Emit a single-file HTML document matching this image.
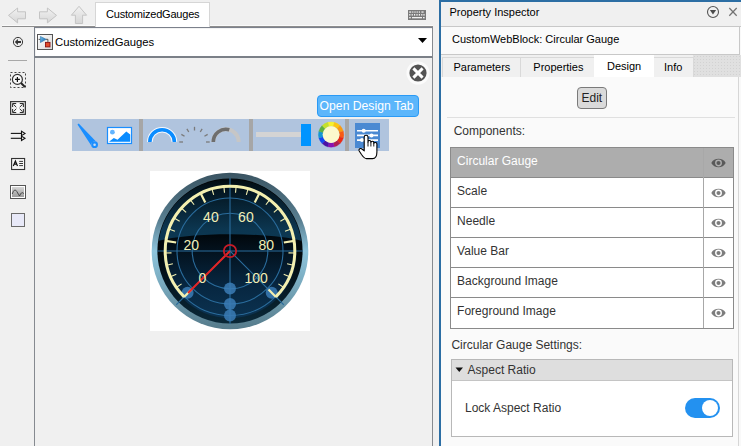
<!DOCTYPE html>
<html><head><meta charset="utf-8">
<style>
*{margin:0;padding:0;box-sizing:border-box}
html,body{width:741px;height:446px;overflow:hidden;background:#f0f0f0;font-family:"Liberation Sans",sans-serif;color:#000}
.a{position:absolute}
.t{position:absolute;white-space:nowrap;line-height:1}
</style></head><body>
<!-- LEFT EDITOR -->
<svg class="a" style="left:0;top:0" width="95" height="26" viewBox="0 0 95 26"><defs><linearGradient id="ga" x1="0" y1="0" x2="0" y2="1"><stop offset="0" stop-color="#f2f2f2"/><stop offset="1" stop-color="#d6d6d6"/></linearGradient></defs><path d="M8.5,15.4 L17.6,8 L17.6,11.8 L25.5,11.8 L25.5,18.8 L17.6,18.8 L17.6,22.9Z" fill="url(#ga)" stroke="#c4c4c4" stroke-width="1"/><path d="M56.5,15.4 L47.4,8 L47.4,11.8 L39.5,11.8 L39.5,18.8 L47.4,18.8 L47.4,22.9Z" fill="url(#ga)" stroke="#c4c4c4" stroke-width="1"/><path d="M79,6.3 L86.6,15.2 L82.6,15.2 L82.6,23.5 L75.4,23.5 L75.4,15.2 L71.4,15.2Z" fill="url(#ga)" stroke="#c4c4c4" stroke-width="1"/></svg>
<div class="a" style="left:2px;top:25px;width:431px;height:1px;background:#fafafa"></div>
<div class="a" style="left:2px;top:26px;width:431px;height:1px;background:#8e8e8e"></div>
<div class="a" style="left:95px;top:2px;width:115px;height:25px;background:#fff;border:1px solid #d6d6d6;border-bottom:none"></div>
<div class="t" style="left:106px;top:9.49px;font-size:11px;color:#000;letter-spacing:-0.2px">CustomizedGauges</div>
<svg class="a" style="left:407px;top:9px" width="20" height="12" viewBox="0 0 20 12"><rect x="1" y="1" width="18" height="10" fill="#7a7a7a"/><g fill="#f0f0f0"><rect x="2.2" y="2.4" width="2" height="1.3"/><rect x="5.2" y="2.4" width="1.2" height="1.3"/><rect x="7.4" y="2.4" width="1.2" height="1.3"/><rect x="9.6" y="2.4" width="1.2" height="1.3"/><rect x="11.8" y="2.4" width="1.2" height="1.3"/><rect x="14.4" y="2.4" width="2.2" height="1.3"/><rect x="2.2" y="5" width="1.2" height="1.6"/><rect x="4.6" y="5" width="1.2" height="1.6"/><rect x="7" y="5" width="1.2" height="1.6"/><rect x="9.4" y="5" width="1.2" height="1.6"/><rect x="11.8" y="5" width="1.2" height="1.6"/><rect x="14.2" y="5" width="1.2" height="1.6"/><rect x="16.4" y="5" width="1.2" height="1.6"/><rect x="2.2" y="8" width="1.6" height="1.3"/><rect x="5" y="8" width="10" height="1.3"/><rect x="16" y="8" width="1.6" height="1.3"/></g></svg>
<div class="a" style="left:34px;top:27px;width:399px;height:31px;background:#fff;border-left:1px solid #7a808a;border-top:1px solid #7c818c;border-right:1px solid #868a90;border-bottom:2px solid #7b8088;box-shadow:inset 1px 1px 0 #f2f2f2"></div>
<svg class="a" style="left:37px;top:34px" width="16" height="16" viewBox="0 0 16 16"><defs><linearGradient id="gb" x1="0" y1="0" x2="1" y2="1"><stop offset="0" stop-color="#fff"/><stop offset="1" stop-color="#d8d8d8"/></linearGradient></defs><rect x="0.5" y="0.5" width="15" height="15" fill="url(#gb)" stroke="#555"/><path d="M1.6,5.4 H3.4 M9,5.3 L10.9,5.3 L10.9,8.4" fill="none" stroke="#333" stroke-width="0.8"/><defs><linearGradient id="gt" x1="0" y1="0" x2="1" y2="1"><stop offset="0" stop-color="#6cc0f0"/><stop offset="1" stop-color="#1a64a8"/></linearGradient></defs><path d="M3.4,2.4 L9.2,5.3 L3.4,8.6Z" fill="url(#gt)" stroke="#1d5f94" stroke-width="0.5"/><rect x="8.5" y="8.4" width="4.5" height="4.5" fill="#e04a28" stroke="#8a1010" stroke-width="0.9"/></svg>
<div class="t" style="left:55px;top:37.03px;font-size:11.3px;color:#000;">CustomizedGauges</div>
<svg class="a" style="left:416px;top:37px" width="12" height="7" viewBox="0 0 12 7"><path d="M2,1 L11,1 L6.5,6Z" fill="#000"/></svg>
<div class="a" style="left:34px;top:58px;width:1px;height:388px;background:#868a90"></div>
<div class="a" style="left:432px;top:58px;width:1px;height:388px;background:#868a90"></div>
<svg class="a" style="left:0;top:27px" width="34" height="210" viewBox="0 27 34 210"><circle cx="18" cy="42" r="4.6" fill="#ececec" stroke="#3a3a3a" stroke-width="1"/><path d="M14.8,42 L17.9,39.1 L17.9,40.9 L21,40.9 L21,43.1 L17.9,43.1 L17.9,44.9Z" fill="#333"/><rect x="8" y="60" width="19" height="1" fill="#a8a8a8"/><rect x="10.5" y="72.5" width="15" height="15" fill="none" stroke="#444" stroke-width="1" stroke-dasharray="2,2"/><circle cx="17.4" cy="79.4" r="5" fill="#f8f8f8" stroke="#333" stroke-width="1.2"/><path d="M15,79.4 H19.9 M17.4,77 V81.9" stroke="#111" stroke-width="1.2"/><path d="M21,83 L25,87" stroke="#222" stroke-width="2"/><defs><linearGradient id="gf" x1="0" y1="0" x2="1" y2="0"><stop offset="0" stop-color="#e4e4e4"/><stop offset="0.5" stop-color="#fdfdfd"/><stop offset="1" stop-color="#e4e4e4"/></linearGradient></defs><rect x="10.6" y="101.6" width="14.8" height="12.8" fill="url(#gf)" stroke="#3a3a3a" stroke-width="1.2"/><g stroke="#222" stroke-width="0.95" fill="none"><path d="M12.6,107 V103.5 H16.2 M13.4,104.3 L16.3,107.2"/><path d="M23.4,107 V103.5 H19.8 M22.6,104.3 L19.7,107.2"/><path d="M12.6,109 V112.5 H16.2 M13.4,111.7 L16.3,108.8"/><path d="M23.4,109 V112.5 H19.8 M22.6,111.7 L19.7,108.8"/></g><g stroke="#111" stroke-width="1.1" fill="none"><path d="M10.8,133.4 H21.5"/><path d="M21.5,131.2 L25,133.4 L21.5,135.6Z" fill="#f4f4f4"/><path d="M10.8,138.3 H21.5"/><path d="M21.5,136.1 L25,138.3 L21.5,140.5Z" fill="#f4f4f4"/></g><rect x="11.6" y="158.5" width="13" height="11" fill="#f6f6f6" stroke="#333" stroke-width="1.1"/><path d="M13.3,166 L15.4,161 L17.5,166 M14.1,164.2 H16.7" stroke="#111" stroke-width="1.2" fill="none"/><path d="M19.2,161.4 H23 M19.2,163.5 H23 M19.2,165.6 H23" stroke="#222" stroke-width="0.9"/><defs><linearGradient id="gi" x1="0" y1="0" x2="0" y2="1"><stop offset="0" stop-color="#d6d6d6"/><stop offset="1" stop-color="#9c9c9c"/></linearGradient></defs><rect x="10.5" y="185.5" width="15" height="13" fill="#fff" stroke="#555" stroke-width="1"/><rect x="12" y="187" width="12" height="10" fill="url(#gi)"/><path d="M12.2,194 Q14.5,187.5 16.8,191.5 T19.5,196 Q21.5,191 23.8,193.5" fill="none" stroke="#3a3a3a" stroke-width="0.9"/><rect x="11.5" y="213.5" width="13" height="13" fill="#e8e9f8" stroke="#6a6a6a" stroke-width="1"/></svg>
<!-- CANVAS -->
<svg class="a" style="left:405px;top:60px" width="26" height="26" viewBox="0 0 26 26"><circle cx="13" cy="13" r="11.5" fill="#fbfbfb"/><circle cx="13" cy="13" r="8.6" fill="#545454"/><path d="M8.4,8.4 L17.6,17.6 M17.6,8.4 L8.4,17.6" stroke="#fff" stroke-width="2.9"/></svg>
<div class="a" style="left:317px;top:95px;width:102px;height:22px;background:#5cb6fb;border:1px solid #2a9af5;border-radius:4px"></div>
<div class="t" style="left:319.6px;top:100.17px;font-size:12.2px;color:#fff;">Open Design Tab</div>
<div class="a" style="left:72px;top:119px;width:317px;height:32px;background:#b0c4de"></div>
<div class="a" style="left:139px;top:119px;width:4px;height:32px;background:#a6a6a6"></div>
<div class="a" style="left:249px;top:119px;width:4px;height:32px;background:#a6a6a6"></div>
<div class="a" style="left:345px;top:119px;width:4px;height:32px;background:#a6a6a6"></div>
<svg class="a" style="left:72px;top:119px" width="317" height="32" viewBox="72 119 317 32"><path d="M77.47,124.50 L92.02,146.76 A3.3,3.3 0 1 1 97.18,142.64 L78.73,123.50 Z" fill="#1a8eff"/><circle cx="94.6" cy="144.7" r="3.4" fill="#1a8eff"/><circle cx="94.6" cy="144.7" r="1.3" fill="#c9dcf2"/><rect x="107.5" y="127.5" width="24" height="16" fill="#fff" stroke="#1a8eff" stroke-width="1.2"/><circle cx="112.4" cy="132.2" r="2.4" fill="#62b4ff"/><path d="M109,141.8 L113.8,138 L117.5,139.8 L126.3,131.5 L130.2,134.5 L130.2,141.8Z" fill="#0a8cff"/><path d="M149.8,142 A12.3,12.3 0 0 1 174.4,142" fill="none" stroke="#f4f8ff" stroke-width="5.6"/><path d="M149.8,142 A12.3,12.3 0 0 1 174.4,142" fill="none" stroke="#0a8cff" stroke-width="3.6"/><path d="M206.00,142.00 L209.70,142.00" stroke="#7a7a7a" stroke-width="1.3"/><path d="M204.46,136.25 L207.66,134.40" stroke="#7a7a7a" stroke-width="1.3"/><path d="M200.25,132.04 L202.10,128.84" stroke="#7a7a7a" stroke-width="1.3"/><path d="M194.50,130.50 L194.50,126.80" stroke="#7a7a7a" stroke-width="1.3"/><path d="M188.75,132.04 L186.90,128.84" stroke="#7a7a7a" stroke-width="1.3"/><path d="M184.54,136.25 L181.34,134.40" stroke="#7a7a7a" stroke-width="1.3"/><path d="M183.00,142.00 L179.30,142.00" stroke="#7a7a7a" stroke-width="1.3"/><path d="M213.3,142 A12.7,12.7 0 0 1 238.7,142" fill="none" stroke="#c6c6c6" stroke-width="4"/><path d="M213.3,142 A12.7,12.7 0 0 1 229.29,129.73" fill="none" stroke="#6e6e6e" stroke-width="3.6"/><rect x="256" y="132" width="45" height="5" fill="#d4d4d4"/><rect x="301" y="124" width="10" height="22" fill="#0094ff"/><path d="M327.81,122.33 A12.7,12.7 0 0 1 334.39,122.33 L333.27,126.49 A8.4,8.4 0 0 0 328.93,126.49 Z" fill="#f6f02e" stroke="#f6f02e" stroke-width="0.3"/><path d="M334.39,122.33 A12.7,12.7 0 0 1 340.08,125.62 L337.04,128.66 A8.4,8.4 0 0 0 333.27,126.49 Z" fill="#fbc512" stroke="#fbc512" stroke-width="0.3"/><path d="M340.08,125.62 A12.7,12.7 0 0 1 343.37,131.31 L339.21,132.43 A8.4,8.4 0 0 0 337.04,128.66 Z" fill="#f99a12" stroke="#f99a12" stroke-width="0.3"/><path d="M343.37,131.31 A12.7,12.7 0 0 1 343.37,137.89 L339.21,136.77 A8.4,8.4 0 0 0 339.21,132.43 Z" fill="#f85a14" stroke="#f85a14" stroke-width="0.3"/><path d="M343.37,137.89 A12.7,12.7 0 0 1 340.08,143.58 L337.04,140.54 A8.4,8.4 0 0 0 339.21,136.77 Z" fill="#ea2a14" stroke="#ea2a14" stroke-width="0.3"/><path d="M340.08,143.58 A12.7,12.7 0 0 1 334.39,146.87 L333.27,142.71 A8.4,8.4 0 0 0 337.04,140.54 Z" fill="#b01e50" stroke="#b01e50" stroke-width="0.3"/><path d="M334.39,146.87 A12.7,12.7 0 0 1 327.81,146.87 L328.93,142.71 A8.4,8.4 0 0 0 333.27,142.71 Z" fill="#8a12b0" stroke="#8a12b0" stroke-width="0.3"/><path d="M327.81,146.87 A12.7,12.7 0 0 1 322.12,143.58 L325.16,140.54 A8.4,8.4 0 0 0 328.93,142.71 Z" fill="#4a12a4" stroke="#4a12a4" stroke-width="0.3"/><path d="M322.12,143.58 A12.7,12.7 0 0 1 318.83,137.89 L322.99,136.77 A8.4,8.4 0 0 0 325.16,140.54 Z" fill="#1448f0" stroke="#1448f0" stroke-width="0.3"/><path d="M318.83,137.89 A12.7,12.7 0 0 1 318.83,131.31 L322.99,132.43 A8.4,8.4 0 0 0 322.99,136.77 Z" fill="#1496d2" stroke="#1496d2" stroke-width="0.3"/><path d="M318.83,131.31 A12.7,12.7 0 0 1 322.12,125.62 L325.16,128.66 A8.4,8.4 0 0 0 322.99,132.43 Z" fill="#5eb040" stroke="#5eb040" stroke-width="0.3"/><path d="M322.12,125.62 A12.7,12.7 0 0 1 327.81,122.33 L328.93,126.49 A8.4,8.4 0 0 0 325.16,128.66 Z" fill="#c4e02c" stroke="#c4e02c" stroke-width="0.3"/><circle cx="331.1" cy="134.6" r="8.4" fill="#fcf9cc"/><rect x="355" y="123" width="25" height="25" fill="#4a89d2"/><g stroke="#fff" stroke-width="1.6"><path d="M357,130.7 H378 M357,135.4 H378 M357,140.1 H378"/></g><g fill="#fff"><circle cx="363.7" cy="130.7" r="2"/><circle cx="371.5" cy="135.4" r="2"/><circle cx="362" cy="140.1" r="2"/></g></svg>
<svg class="a" style="left:354px;top:132px" width="28" height="30" viewBox="354 132 28 30"><path d="M364.2,137 C364.2,134.7 368,134.7 368,137 L368,142 C368,140 370.9,140 370.9,142 L370.9,142.6 C370.9,140.8 373.8,140.8 373.8,142.6 L373.8,143.6 C373.8,142 376.9,142 376.9,144 L376.9,152 C376.9,155.5 375.6,158.6 372.5,158.6 L366.5,158.6 C364.5,158.6 363,156.6 361.5,154.5 L359.2,151 C358.4,149.6 359.6,148 361.2,148.6 L364.2,150.8 Z" fill="#fff" stroke="#000" stroke-width="1.1" stroke-linejoin="round"/><path d="M368,142 V146.5 M370.9,142.6 V146.5 M373.8,143.6 V146.5" stroke="#000" stroke-width="0.9"/></svg>
<div class="a" style="left:150px;top:171px;width:160px;height:160px;background:#fff"></div>
<svg class="a" style="left:150px;top:171px" width="160" height="160" viewBox="150 171 160 160"><defs><linearGradient id="rim" x1="0" y1="0" x2="0" y2="1"><stop offset="0" stop-color="#3a5462"/><stop offset="0.3" stop-color="#587e90"/><stop offset="0.5" stop-color="#8ec4dc"/><stop offset="0.72" stop-color="#78a9bd"/><stop offset="1" stop-color="#557a8a"/></linearGradient><linearGradient id="ring" x1="0" y1="0" x2="0" y2="1"><stop offset="0" stop-color="#000"/><stop offset="0.5" stop-color="#01080c"/><stop offset="1" stop-color="#0a2838"/></linearGradient><linearGradient id="face" x1="0" y1="0" x2="0" y2="1"><stop offset="0" stop-color="#000000"/><stop offset="0.2" stop-color="#03121b"/><stop offset="0.8" stop-color="#0c3650"/><stop offset="1" stop-color="#0c3852"/></linearGradient><linearGradient id="face2" x1="0" y1="0" x2="0" y2="1"><stop offset="0" stop-color="#01070b"/><stop offset="0.37" stop-color="#01070b"/><stop offset="0.5" stop-color="#03121e"/><stop offset="0.75" stop-color="#072640"/><stop offset="1" stop-color="#0b3250"/></linearGradient><clipPath id="fc"><circle cx="230" cy="251" r="72"/></clipPath></defs><circle cx="230" cy="251" r="78.3" fill="url(#rim)"/><circle cx="230" cy="251" r="72.6" fill="url(#ring)"/><circle cx="230" cy="251" r="67" fill="url(#face2)"/><g clip-path="url(#fc)"><path d="M150,171 H310 V244 C285,231 175,231 150,244 Z" fill="url(#face)"/></g><g stroke="#2a6c9c" stroke-width="1.1" fill="none"><circle cx="230" cy="251" r="37.8"/><circle cx="230" cy="251" r="53"/><circle cx="230" cy="251" r="64.5"/><path d="M157,251 H303 M230,178 V324"/><path d="M230,251 L176.26,304.74 M230,251 L283.74,304.74"/></g><g fill="#3b7cb6" fill-opacity="0.85"><circle cx="230" cy="288.6" r="6"/><circle cx="230" cy="304" r="6"/><circle cx="230" cy="315.5" r="6"/><circle cx="187.6" cy="292.8" r="6"/><circle cx="271.7" cy="292.8" r="6"/></g><path d="M184.18,296.82 A64.8,64.8 0 1 1 275.82,296.82" fill="none" stroke="#f4f0b0" stroke-width="3"/><path d="M184.04,296.96 L191.46,289.54" stroke="#f4f0b0" stroke-width="2.2"/><path d="M176.24,287.54 L181.62,283.88" stroke="#f4f0b0" stroke-width="1.1"/><path d="M170.35,276.81 L176.31,274.23" stroke="#f4f0b0" stroke-width="1.1"/><path d="M166.57,265.18 L172.91,263.76" stroke="#f4f0b0" stroke-width="1.1"/><path d="M165.03,253.04 L171.53,252.84" stroke="#f4f0b0" stroke-width="1.1"/><path d="M165.80,240.83 L176.17,242.47" stroke="#f4f0b0" stroke-width="2.2"/><path d="M168.84,228.98 L174.96,231.18" stroke="#f4f0b0" stroke-width="1.1"/><path d="M174.05,217.91 L179.65,221.22" stroke="#f4f0b0" stroke-width="1.1"/><path d="M181.24,208.01 L186.12,212.31" stroke="#f4f0b0" stroke-width="1.1"/><path d="M190.16,199.64 L194.14,204.78" stroke="#f4f0b0" stroke-width="1.1"/><path d="M200.49,193.08 L205.26,202.44" stroke="#f4f0b0" stroke-width="2.2"/><path d="M211.87,188.58 L213.68,194.82" stroke="#f4f0b0" stroke-width="1.1"/><path d="M223.88,186.29 L224.49,192.76" stroke="#f4f0b0" stroke-width="1.1"/><path d="M236.12,186.29 L235.51,192.76" stroke="#f4f0b0" stroke-width="1.1"/><path d="M248.13,188.58 L246.32,194.82" stroke="#f4f0b0" stroke-width="1.1"/><path d="M259.51,193.08 L254.74,202.44" stroke="#f4f0b0" stroke-width="2.2"/><path d="M269.84,199.64 L265.86,204.78" stroke="#f4f0b0" stroke-width="1.1"/><path d="M278.76,208.01 L273.88,212.31" stroke="#f4f0b0" stroke-width="1.1"/><path d="M285.95,217.91 L280.35,221.22" stroke="#f4f0b0" stroke-width="1.1"/><path d="M291.16,228.98 L285.04,231.18" stroke="#f4f0b0" stroke-width="1.1"/><path d="M294.20,240.83 L283.83,242.47" stroke="#f4f0b0" stroke-width="2.2"/><path d="M294.97,253.04 L288.47,252.84" stroke="#f4f0b0" stroke-width="1.1"/><path d="M293.43,265.18 L287.09,263.76" stroke="#f4f0b0" stroke-width="1.1"/><path d="M289.65,276.81 L283.69,274.23" stroke="#f4f0b0" stroke-width="1.1"/><path d="M283.76,287.54 L278.38,283.88" stroke="#f4f0b0" stroke-width="1.1"/><path d="M275.96,296.96 L268.54,289.54" stroke="#f4f0b0" stroke-width="2.2"/><path d="M230,251 L188,293" stroke="#e42424" stroke-width="2"/><circle cx="230" cy="251" r="6.2" fill="none" stroke="#c81c28" stroke-width="1.8"/></svg>
<div class="t" style="left:198.5px;top:271.15px;font-size:14px;color:#f2eeb4;">0</div>
<div class="t" style="left:183.4px;top:238.05px;font-size:14px;color:#f2eeb4;">20</div>
<div class="t" style="left:203.1px;top:210.05px;font-size:14px;color:#f2eeb4;">40</div>
<div class="t" style="left:238.1px;top:210.05px;font-size:14px;color:#f2eeb4;">60</div>
<div class="t" style="left:258.5px;top:238.05px;font-size:14px;color:#f2eeb4;">80</div>
<div class="t" style="left:244.4px;top:271.15px;font-size:14px;color:#f2eeb4;">100</div>
<!-- RIGHT PANEL -->
<div class="a" style="left:439px;top:0;width:302px;height:446px;background:#f9f9f9;border-left:2px solid #2c6ea4;border-top:2px solid #2c6ea4"></div>
<div class="a" style="left:441px;top:2px;width:300px;height:25px;background:#f0f0f0;border-bottom:1px solid #c8c8c8"></div>
<div class="t" style="left:449.5px;top:7.29px;font-size:11px;color:#000;">Property Inspector</div>
<svg class="a" style="left:705px;top:4px" width="36" height="16" viewBox="0 0 36 16"><circle cx="8" cy="8" r="5.5" fill="none" stroke="#555" stroke-width="1.1"/><path d="M4.9,6 L11.1,6 L8,10.4Z" fill="#4a4a4a"/><path d="M24.3,4 L31.7,11.7 M31.7,4 L24.3,11.7" stroke="#747474" stroke-width="1.25"/></svg>
<div class="a" style="left:441px;top:27px;width:299px;height:28px;background:#fafafa;border-right:1px solid #c8c8c8;border-bottom:1px solid #c8c8c8"></div>
<div class="t" style="left:452px;top:34.49px;font-size:11px;color:#000;">CustomWebBlock: Circular Gauge</div>
<div class="a" style="left:441px;top:55px;width:300px;height:22px;background:#f0f0f0"></div>
<div class="a" style="left:693px;top:55px;width:48px;height:22px;background-color:#e0e0e0;background-image:radial-gradient(#d2d2d2 0.7px,transparent 0.8px);background-size:3px 3px"></div>
<div class="a" style="left:442px;top:57px;width:79px;height:20px;background:#f0f0f0;border:1px solid #d9d9d9;border-bottom:none"></div>
<div class="a" style="left:520px;top:57px;width:75px;height:20px;background:#f0f0f0;border:1px solid #d9d9d9;border-bottom:none"></div>
<div class="a" style="left:653px;top:57px;width:41px;height:20px;background:#f0f0f0;border:1px solid #d9d9d9;border-bottom:none"></div>
<div class="a" style="left:594px;top:55px;width:60px;height:22px;background:#fff"></div>
<div class="t" style="left:453.5px;top:61.89px;font-size:11px;color:#000;">Parameters</div>
<div class="t" style="left:533.3px;top:61.89px;font-size:11px;color:#000;">Properties</div>
<div class="t" style="left:607px;top:60.89px;font-size:11px;color:#000;">Design</div>
<div class="t" style="left:664px;top:61.89px;font-size:11px;color:#000;">Info</div>
<div class="a" style="left:441px;top:77px;width:298px;height:369px;background:#fafafa;border-right:1px solid #d6d6d6"></div>
<div class="a" style="left:577px;top:87px;width:30px;height:22px;background:#dadada;border:1px solid #7a7a7a;border-radius:4px"></div>
<div class="t" style="left:581.5px;top:91.64px;font-size:12px;color:#222;">Edit</div>
<div class="a" style="left:447px;top:117px;width:288px;height:1px;background:#e0e0e0"></div>
<div class="t" style="left:453.7px;top:125.04px;font-size:12px;color:#333;">Components:</div>
<div class="a" style="left:450px;top:147px;width:284px;height:182px;background:#fff;border:1px solid #8a8a8a"></div>
<div class="a" style="left:451px;top:148px;width:282px;height:29px;background:#adadad"></div>
<div class="a" style="left:451px;top:177px;width:282px;height:1px;background:#8a8a8a"></div>
<div class="a" style="left:451px;top:207px;width:282px;height:1px;background:#8a8a8a"></div>
<div class="a" style="left:451px;top:237px;width:282px;height:1px;background:#8a8a8a"></div>
<div class="a" style="left:451px;top:267px;width:282px;height:1px;background:#8a8a8a"></div>
<div class="a" style="left:451px;top:297px;width:282px;height:1px;background:#8a8a8a"></div>
<div class="a" style="left:703px;top:148px;width:1px;height:180px;background:#a8a8a8"></div>
<div class="t" style="left:457.1px;top:154.64px;font-size:12px;color:#fff;">Circular Gauge</div>
<svg class="a" style="left:710.5px;top:158px" width="15" height="10" viewBox="0 0 15 10"><path d="M0.3,5 C3,-0.6 12,-0.6 14.7,5 C12,10.6 3,10.6 0.3,5Z" fill="#595959"/><circle cx="7.5" cy="5" r="2.75" fill="none" stroke="#adadad" stroke-width="1.4"/></svg>
<div class="t" style="left:457.1px;top:184.64px;font-size:12px;color:#333;">Scale</div>
<svg class="a" style="left:710.5px;top:188px" width="15" height="10" viewBox="0 0 15 10"><path d="M0.3,5 C3,-0.6 12,-0.6 14.7,5 C12,10.6 3,10.6 0.3,5Z" fill="#7d7d7d"/><circle cx="7.5" cy="5" r="2.75" fill="none" stroke="#fff" stroke-width="1.4"/></svg>
<div class="t" style="left:457.1px;top:214.64px;font-size:12px;color:#333;">Needle</div>
<svg class="a" style="left:710.5px;top:218px" width="15" height="10" viewBox="0 0 15 10"><path d="M0.3,5 C3,-0.6 12,-0.6 14.7,5 C12,10.6 3,10.6 0.3,5Z" fill="#7d7d7d"/><circle cx="7.5" cy="5" r="2.75" fill="none" stroke="#fff" stroke-width="1.4"/></svg>
<div class="t" style="left:457.1px;top:244.64px;font-size:12px;color:#333;">Value Bar</div>
<svg class="a" style="left:710.5px;top:248px" width="15" height="10" viewBox="0 0 15 10"><path d="M0.3,5 C3,-0.6 12,-0.6 14.7,5 C12,10.6 3,10.6 0.3,5Z" fill="#7d7d7d"/><circle cx="7.5" cy="5" r="2.75" fill="none" stroke="#fff" stroke-width="1.4"/></svg>
<div class="t" style="left:457.1px;top:274.64px;font-size:12px;color:#333;">Background Image</div>
<svg class="a" style="left:710.5px;top:278px" width="15" height="10" viewBox="0 0 15 10"><path d="M0.3,5 C3,-0.6 12,-0.6 14.7,5 C12,10.6 3,10.6 0.3,5Z" fill="#7d7d7d"/><circle cx="7.5" cy="5" r="2.75" fill="none" stroke="#fff" stroke-width="1.4"/></svg>
<div class="t" style="left:457.1px;top:304.64px;font-size:12px;color:#333;">Foreground Image</div>
<svg class="a" style="left:710.5px;top:308px" width="15" height="10" viewBox="0 0 15 10"><path d="M0.3,5 C3,-0.6 12,-0.6 14.7,5 C12,10.6 3,10.6 0.3,5Z" fill="#7d7d7d"/><circle cx="7.5" cy="5" r="2.75" fill="none" stroke="#fff" stroke-width="1.4"/></svg>
<div class="t" style="left:451.4px;top:339.24px;font-size:12px;color:#333;">Circular Gauge Settings:</div>
<div class="a" style="left:451px;top:359px;width:282px;height:78px;background:#fff;border:1px solid #b8b8b8"></div>
<div class="a" style="left:452px;top:360px;width:280px;height:21px;background:#dedede;border-bottom:1px solid #c4c4c4"></div>
<svg class="a" style="left:455px;top:367px" width="9" height="6" viewBox="0 0 9 6"><path d="M0.5,0.5 L8,0.5 L4.25,5Z" fill="#111"/></svg>
<div class="t" style="left:467.6px;top:364.14px;font-size:12px;color:#333;">Aspect Ratio</div>
<div class="t" style="left:465px;top:402.14px;font-size:12px;color:#333;">Lock Aspect Ratio</div>
<div class="a" style="left:685px;top:398px;width:35px;height:20px;background:#2391f0;border-radius:10px"></div>
<div class="a" style="left:702px;top:400px;width:16px;height:16px;background:#fff;border-radius:8px"></div>
</body></html>
